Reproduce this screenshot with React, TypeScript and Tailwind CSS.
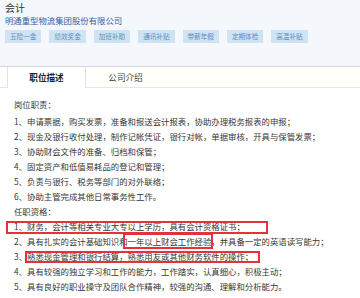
import React from "react"

const tags = ["五险一金", "绩效奖金", "加班补助", "通讯补贴", "带薪年假", "定期体检", "高温补贴"]

const duties = [
  "1、申请票据，购买发票，准备和报送会计报表，协助办理税务报表的申报；",
  "2、现金及银行收付处理，制作记帐凭证，银行对帐，单据审核，开具与保管发票；",
  "3、协助财会文件的准备、归档和保管；",
  "4、固定资产和低值易耗品的登记和管理；",
  "5、负责与银行、税务等部门的对外联络；",
  "6、协助主管完成其他日常事务性工作。",
]

const requirements = [
  "1、财务，会计等相关专业大专以上学历，具有会计资格证书；",
  "2、具有扎实的会计基础知识和一年以上财会工作经验，并具备一定的英语读写能力；",
  "3、熟悉现金管理和银行结算，熟悉用友或其他财务软件的操作；",
  "4、具有较强的独立学习和工作的能力，工作踏实，认真细心，积极主动；",
  "5、具有良好的职业操守及团队合作精神，较强的沟通、理解和分析能力。",
]

function App() {
  return (
    <div className="relative w-[360px] h-[298px] overflow-hidden bg-white font-['Noto_Sans_CJK_SC',sans-serif]">
      <div className="h-[67px] bg-[#f4f7fc] border-b border-[#d3d7df] px-[5px] pt-[2px]">
        <h1 className="text-[10px] leading-[12px] text-[#333]">会计</h1>
        <p className="text-[8.4px] leading-[12px] text-[#2f5ea6]">明通重型物流集团股份有限公司</p>
        <div className="flex gap-[8px] mt-[4px]">
          {tags.map((t) => (
            <span
              key={t}
              className="h-[13px] px-[5px] text-[6.6px] leading-[13px] bg-[#cfe3f3] text-[#5c8ebe]"
            >
              {t}
            </span>
          ))}
        </div>
      </div>

      <div className="flex h-[21px] bg-[#fffffb] border-b border-[#e6e6e6] pl-[7px]">
        <div className="w-[79px] h-[21px] bg-white border-l border-r border-[#e3e3e3] flex items-center justify-center text-[8.6px] font-bold text-[#222]">
          职位描述
        </div>
        <div className="w-[79px] h-[20px] flex items-center justify-center text-[8.6px] text-[#444]">
          公司介绍
        </div>
      </div>

      <div className="px-[14px] pt-[9px] text-[8.4px] leading-[15px] text-[#363636]">
        <p>岗位职责：</p>
        <div className="mt-[2px]">
          {duties.map((d) => (
            <p key={d} className="whitespace-nowrap">{d}</p>
          ))}
        </div>
        <p>任职资格：</p>
        {requirements.map((d) => (
          <p key={d} className="whitespace-nowrap">{d}</p>
        ))}
      </div>

      <div className="absolute left-[6px] top-[221px] w-[262px] h-[13px] border-2 border-[#e4323c]" />
      <div className="absolute left-[123px] top-[233px] w-[90px] h-[16px] border-2 border-[#e4323c]" />
      <div className="absolute left-[25px] top-[251px] w-[235px] h-[12px] border-2 border-[#e4323c]" />
    </div>
  )
}

export default App
